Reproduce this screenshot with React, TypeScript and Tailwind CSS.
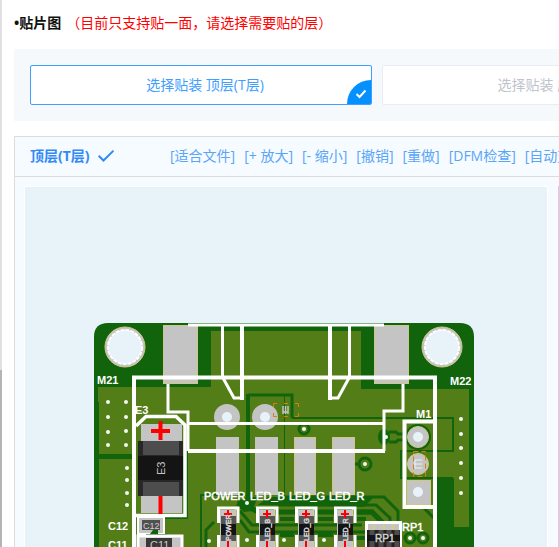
import React, { useState } from "react";

const tools = ["[适合文件]", "[+ 放大]", "[- 缩小]", "[撤销]", "[重做]", "[DFM检查]", "[自动对齐]"];

const layers = ["选择贴装 顶层(T层)", "选择贴装 底层(B层)"];

const vias: [number, number][] = [
  [108, 402], [126, 402], [108, 417], [126, 417], [108, 432], [126, 431],
  [108, 445], [126, 445], [127, 468], [127, 480], [127, 493], [127, 505],
  [461, 419], [461, 434], [461, 448], [461, 463], [461, 478], [461, 493],
  [304, 429], [386, 437], [365, 464], [247, 503], [209, 541], [247, 540],
  [284, 540], [324, 540], [410, 538], [423, 538],
];

const leds = [
  { x: 228, name: "POWER", label: 204 },
  { x: 267, name: "LED_B", label: 250 },
  { x: 306, name: "LED_G", label: 289 },
  { x: 345, name: "LED_R", label: 329 },
];

function MountingHole({ x, y }: { x: number; y: number }) {
  return (
    <g>
      <circle cx={x} cy={y} r="20" fill="#c4c4c4" stroke="#cdc888" />
      <circle cx={x} cy={y} r="17" fill="#e8f3f9" stroke="#fff" strokeWidth="2" strokeDasharray="4 1" />
    </g>
  );
}

function RoundPad({ x, y, r, ring }: { x: number; y: number; r: number; ring?: boolean }) {
  return (
    <g>
      <circle cx={x} cy={y} r={r} fill="#c4c4c4" stroke={ring ? "#cdc888" : "none"} />
      <circle cx={x} cy={y} r="5" fill="#e8f3f9" />
    </g>
  );
}

function Led({ x, name }: { x: number; name: string }) {
  return (
    <g>
      <rect x={x - 8} y="510" width="16" height="50" fill="#c4c4c4" />
      <path d={`M${x + 7.5} 509V518M${x + 7.5} 538V548`} stroke="#d4cf80" fill="none" />
      <path
        d={`M${x - 9.5} 523V508H${x + 10}V523M${x - 9.5} 535V550M${x + 10} 535V550`}
        stroke="#fff"
        strokeWidth="3"
        fill="none"
      />
      <rect x={x - 7} y="516" width="15" height="25" fill="#555" />
      <rect x={x - 7} y="524" width="15" height="11" fill="#141414" />
      <path d={`M${x - 4} 514H${x + 4}M${x} 510V518M${x} 541V550`} stroke="#f00" strokeWidth="2" />
      <text
        transform={`translate(${x + 3} 541) rotate(-90)`}
        fontSize="7"
        fill="#d0d0d0"
        stroke="#d0d0d0"
        strokeWidth="0.500"
      >
        {name}
      </text>
    </g>
  );
}

function Board() {
  return (
    <svg
      viewBox="25 187 522 420"
      width="522"
      height="420"
      className="block font-['Liberation_Sans',Arial,sans-serif]"
      role="img"
      aria-label="PCB"
    >
      {/* substrate and copper pours */}
      <path d="M94 620V337Q94 323 108 323H460Q474 323 474 337V620Z" fill="#12640c" />
      <path d="M98 387H211V331H361V389H469V527H454V478H435V620H99V459H132V454H99V402H98Z" fill="#527d17" />

      {/* traces */}
      <g fill="none" stroke="#12640c">
        <path d="M292 418H453V451H401V478H453" strokeWidth="2" />
        <path d="M248 394V497" strokeWidth="4" />
        <path d="M248 395H292V418" strokeWidth="3" />
        <path d="M284.5 396V497" />
        <path d="M187 451V518H138M201 560V495H246" strokeWidth="2" />
        <path d="M278 497H384L398 511V525M278 505H376L390 518V526" strokeWidth="3" />
        <path d="M238 501L258 512H372L384 524" strokeWidth="5" />
        <path d="M240 511L252 525H362M240 520L249 532H370" strokeWidth="3" />
        <path d="M356 512H372L380 520" strokeWidth="5" />
        <path d="M280 519H294M318 519H333M357 519H366M280 535H294M318 535H333M355 538H366" strokeWidth="4" />
        <path d="M355 464H360M389 432H396L398 434H407M389 442H396L398 440H407" strokeWidth="3" />
        <path d="M424 508L462 547V560M432 506L466 541" strokeWidth="3" />
        <path d="M206 547V530L214 522" strokeWidth="3" />
        <circle cx="365" cy="464" r="6" strokeWidth="3" />
        <circle cx="304" cy="429" r="5" strokeWidth="3" />
        <circle cx="410" cy="538" r="5" strokeWidth="3" />
        <circle cx="423" cy="538" r="5" strokeWidth="3" />
      </g>
      <ellipse cx="384" cy="437" rx="6" ry="8" fill="#12640c" />
      <path d="M246 497H258L252 511L244 512L236 505ZM258 505L268 497H374L364 507Z" fill="#12640c" />
      <rect x="183" y="456" width="4" height="60" fill="#12640c" />
      <rect x="437" y="478" width="17" height="50" fill="#12640c" />

      <MountingHole x={125} y={347} />
      <MountingHole x={442} y={347} />

      {/* connector pads */}
      <g fill="#c4c4c4" stroke="#cdc888">
        <rect x="163.5" y="325.5" width="34" height="58" />
        <rect x="374.5" y="325.5" width="34" height="58" />
        <rect x="294.5" y="437.5" width="21" height="57" />
        <rect x="332.5" y="437.5" width="22" height="57" />
      </g>
      <rect x="216" y="437" width="23" height="58" fill="#c4c4c4" />
      <rect x="255" y="437" width="23" height="58" fill="#c4c4c4" />
      <RoundPad x={227} y={417} r={13} />
      <RoundPad x={265} y={417} r={13} />

      <circle cx="418" cy="437" r="13" fill="#12640c" />
      <RoundPad x={418} y={437} r={10.5} ring />
      <circle cx="418" cy="464" r="10.5" fill="#c4c4c4" stroke="#cdc888" />
      <rect x="407.5" y="480.5" width="23" height="24" fill="#c4c4c4" stroke="#cdc888" />
      <circle cx="418" cy="492" r="5" fill="#e8f3f9" />
      <path d="M415 460H422M414 464H422M415 460V468H422" stroke="#e8f3f9" fill="none" />
      <path d="M413.5 451.5H425.5V476.5H413.5Z" stroke="#e07b10" strokeDasharray="5 3" fill="none" />
      <path
        d="M277 403.500H273.500V407M273.500 413V416.500H277M295 403.500H298.500V407M298.500 413V416.500H295M284 403.500H288M284 416.500H288"
        stroke="#e07b10"
        fill="none"
      />
      <path d="M283 406V414M283 412H288M285.500 406V414M288 406V414" stroke="#c4c4c4" strokeWidth="1.500" fill="none" />

      {/* silkscreen outlines */}
      <g fill="none" stroke="#fff" strokeWidth="3">
        <path d="M188 325H384M188 423.5H385" />
        <path d="M134 560V377.5H435V560" strokeWidth="4" />
        <path d="M222.5 326V377L234 398H242M349.5 326V377L338 398H330" />
        <path d="M242 326V400M330 326V400M188 451H385" strokeWidth="4" />
        <path d="M168 384V412H188V451M403 384V411H384V451" />
        <path d="M435 421.5H404.5V507H435" strokeWidth="4" />
        <path d="M136 426L146 416.5H176L185 425V515.5H136" strokeWidth="3.5" />
      </g>

      {/* E3 */}
      <rect x="141" y="424" width="41" height="89" fill="#c4c4c4" />
      <rect x="138" y="441" width="45" height="55" fill="#282828" />
      <rect x="143" y="441" width="36" height="14" fill="#4d4d4d" />
      <rect x="143" y="482" width="36" height="14" fill="#4d4d4d" />
      <rect x="138" y="456" width="45" height="24" fill="#141414" />
      <text transform="translate(165 475) rotate(-90)" fontSize="11" fill="#c4c4c4">E3</text>
      <path d="M151 431H170M160.5 421V440M160.5 496V514" stroke="#f00" strokeWidth="4" />

      {/* C12, C11 */}
      <rect x="138" y="517" width="26" height="17" fill="#c4c4c4" stroke="#fff" strokeWidth="2" />
      <rect x="142" y="520" width="18" height="10" fill="#505050" />
      <text x="143" y="529" fontSize="9" fill="#d0d0d0">C12</text>
      <path d="M146 534H150L153 530H158V534H168V538H146Z" fill="#12640c" />
      <path d="M138 560V536H182V560" fill="#c4c4c4" stroke="#fff" strokeWidth="3" />
      <rect x="146" y="538" width="26" height="20" fill="#383838" />
      <text x="150" y="549" fontSize="11" fill="#c8c8c8">C11</text>

      {leds.map((led) => (
        <Led key={led.name} x={led.x} name={led.name} />
      ))}

      {/* RP1 */}
      <rect x="366.5" y="522.5" width="34" height="40" fill="#c4c4c4" stroke="#fff" strokeWidth="3" />
      <path d="M374 524V530M384 524V530M393 524V530" stroke="#d4cf80" strokeWidth="2" />
      <rect x="367" y="530" width="33" height="30" fill="#222" />
      <path d="M372 530V547M381 530V547M389 530V547M397 530V547" stroke="#4d4d4d" strokeWidth="5" />
      <rect x="367" y="535" width="33" height="6" fill="#141414" />
      <text x="375" y="542" fontSize="10" fill="#d0d0d0" stroke="#d0d0d0" strokeWidth="0.500">RP1</text>

      {vias.map(([x, y]) => (
        <circle key={`${x}-${y}`} cx={x} cy={y} r="2" fill="#f0f8f4" />
      ))}

      {/* reference designators */}
      <g fill="#fff" fontSize="11" fontWeight="bold">
        <text x="97" y="384">M21</text>
        <text x="450" y="385">M22</text>
        <text x="135" y="414">E3</text>
        <text x="416" y="418">M1</text>
        <text x="108" y="530">C12</text>
        <text x="108" y="549">C11</text>
      </g>
      <g fill="#fff" fontSize="11" stroke="#fff" strokeWidth="0.500">
        <text x="402" y="531">RP1</text>
        {leds.map((led) => (
          <text key={led.name} x={led.label} y="500">{led.name}</text>
        ))}
      </g>
    </svg>
  );
}

export default function App() {
  const [selected, setSelected] = useState(0);
  return (
    <div className="flex h-screen overflow-hidden bg-white font-['Open_Sans','Noto_Sans_CJK_SC',sans-serif] text-sm">
      <div className="flex w-[2px] shrink-0 flex-col bg-[#e0e0e0]">
        <div className="mt-auto h-[177px] bg-[#b4b4b4]" />
      </div>
      <main className="min-w-[738px] flex-1 pl-3">
        <h2 className="flex h-[49px] items-center pb-1 leading-5">
          <span className="font-bold text-[#111]">•贴片图</span>
          <span className="ml-[5px] font-normal text-[#f00]">（目前只支持贴一面，请选择需要贴的层）</span>
        </h2>

        <div className="flex gap-[10px] bg-[#f5f9fb] p-4">
          {layers.map((name, i) => (
            <button
              key={name}
              type="button"
              aria-pressed={selected === i}
              onClick={() => setSelected(i)}
              className={
                selected === i
                  ? "relative h-10 flex-1 overflow-hidden rounded-xs border border-[#409eff] bg-white pl-2 text-[#409eff]"
                  : "relative h-10 flex-1 overflow-hidden rounded-xs border border-[#e8ecf4] bg-white pl-2 text-[#bfc4cc]"
              }
            >
              {name}
              {selected === i && (
                <span className="absolute right-0 bottom-0 flex size-6 items-center justify-center rounded-tl-full bg-[#0590ff]">
                  <svg viewBox="0 0 12 12" className="mt-1 ml-1 size-3" fill="none" stroke="#fff" strokeWidth="2">
                    <path d="M1.5 6L4.5 9L10.5 2.5" />
                  </svg>
                </span>
              )}
            </button>
          ))}
        </div>

        <section className="mt-[15px] border border-[#dcdcdc] bg-[#f5fbff]">
          <header className="flex h-10 items-center border-b border-[#dcdcdc] pb-0.5 pl-[15px]">
            <div className="flex w-[140px] items-center gap-2 font-bold text-[#318af6]">
              顶层(T层)
              <svg viewBox="0 0 16 12" className="h-3 w-4" fill="none" stroke="#318af6" strokeWidth="2">
                <path d="M0.7 5.7L5.5 10.5L15.5 0.7" />
              </svg>
            </div>
            <div className="flex gap-[9px] whitespace-nowrap text-[#5ba5f7]">
              {tools.map((tool) => (
                <button key={tool} type="button">{tool}</button>
              ))}
            </div>
          </header>
          <div className="flex gap-[10px] p-[9px]">
            <div className="shrink-0 border border-white bg-[#e8f3f9]">
              <Board />
            </div>
            <aside className="flex-1 border border-[#c3d6f0] bg-white" />
          </div>
        </section>
      </main>
    </div>
  );
}
